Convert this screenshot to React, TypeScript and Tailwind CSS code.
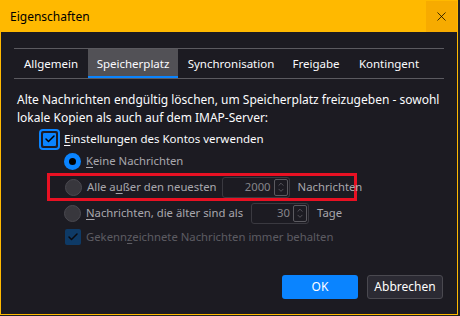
import { X, Check, ChevronUp, ChevronDown } from "lucide-react";

const tabs = [
  { label: "Allgemein", w: "w-[74px]" },
  { label: "Speicherplatz", w: "w-[90px]" },
  { label: "Synchronisation", w: "w-[106px]" },
  { label: "Freigabe", w: "w-[64px]" },
  { label: "Kontingent", w: "w-[82px]" },
];

function Radio({ on }: { on?: boolean }) {
  if (on) {
    return (
      <span className="w-[17px] h-[17px] rounded-full bg-[#0a84ff] flex items-center justify-center shrink-0">
        <span className="w-[7px] h-[7px] rounded-full bg-black" />
      </span>
    );
  }
  return <span className="w-[17px] h-[17px] rounded-full bg-[#38373d] border border-[#4a4950] shrink-0" />;
}

function Spin({ value, w }: { value: string; w: string }) {
  return (
    <div className={`${w} h-[21px] shrink-0 rounded-[3px] border border-[#3a3940] bg-[#1c1b22] flex items-center justify-end pr-[1px]`}>
      <span className="text-[#86858b] pr-[3px]">{value}</span>
      <div className="w-[14px] h-[17px] border border-[#5b5a60] rounded-[2px] flex flex-col items-center justify-center text-[#86858b]">
        <ChevronUp size={10} strokeWidth={1.5} className="-mb-[2px]" />
        <ChevronDown size={10} strokeWidth={1.5} />
      </div>
    </div>
  );
}

export default function App() {
  return (
    <div className="w-[460px] h-[316px] bg-[#202024] overflow-hidden" style={{ fontFamily: "'Noto Sans', 'Open Sans', sans-serif" }}>
      <div className="w-[458px] h-[315px] border border-[#ffb900] flex flex-col text-[11.3px] text-[#fbfbfe] whitespace-nowrap">
        <div className="h-[31px] bg-[#ffb900] flex items-center justify-between shrink-0">
          <span className="pl-[9px] text-black text-[12px]">Eigenschaften</span>
          <div className="w-[31px] h-full bg-[#f7ab00] flex items-center justify-center text-black">
            <X size={15} strokeWidth={1.2} />
          </div>
        </div>
        <div className="flex-1 bg-[#1c1b22] flex flex-col px-[13px] pt-[16px]">
          <div className="flex h-[31px] border-y border-[#5b5a60] items-stretch text-[11.5px]">
            {tabs.map((t) => (
              <div
                key={t.label}
                className={`${t.w} flex items-center justify-center ${t.label === "Speicherplatz" ? "bg-[#525156] border-b-2 border-[#0a84ff] pt-[2px]" : ""}`}
              >
                {t.label}
              </div>
            ))}
          </div>
          <p className="mt-[12px] pl-[3px] leading-[18px] whitespace-normal text-[12px]">
            Alte Nachrichten endgültig löschen, um Speicherplatz freizugeben - sowohl lokale Kopien als auch auf dem IMAP-Server:
          </p>
          <div className="flex items-center gap-[4px] pl-[25px] mt-[1px] h-[22px] text-[11.5px]">
            <span className="w-[21px] h-[21px] rounded-[4px] border-2 border-[#0a84ff] flex items-center justify-center">
              <span className="w-[15px] h-[15px] rounded-[2px] bg-[#0a84ff] border border-[#1c1b22] flex items-center justify-center text-black">
                <Check size={12} strokeWidth={3} />
              </span>
            </span>
            <span>
              <span className="underline underline-offset-2">E</span>instellungen des Kontos verwenden
            </span>
          </div>
          <div className="flex items-center gap-[5px] pl-[50px] h-[22px] text-[#a8a7ad]">
            <Radio on />
            <span>
              <span className="underline underline-offset-2">K</span>eine Nachrichten
            </span>
          </div>
          <div className="ml-[33px] mt-[1px] w-[310px] h-[28px] border-[3px] border-[#e81123] flex items-center gap-[5px] pl-[15px] text-[#a8a7ad]">
            <Radio />
            <span className="w-[132px]">
              Alle a<span className="underline underline-offset-2">u</span>ßer den neuesten
            </span>
            <Spin value="2000" w="w-[68px]" />
            <span className="ml-[3px]">Nachrichten</span>
          </div>
          <div className="flex items-center gap-[5px] pl-[50px] h-[24px] text-[#a8a7ad]">
            <Radio />
            <span className="w-[160px]">
              <span className="underline underline-offset-2">N</span>achrichten, die älter sind als
            </span>
            <Spin value="30" w="w-[58px]" />
            <span className="ml-[3px]">Tage</span>
          </div>
          <div className="flex items-center gap-[5px] pl-[51px] h-[24px] text-[#5d5c62]">
            <span className="w-[16px] h-[16px] rounded-[2px] bg-[#0e3a66] flex items-center justify-center text-[#0a0a0f]">
              <Check size={12} strokeWidth={3} />
            </span>
            <span>
              Gekenn<span className="underline underline-offset-2">z</span>eichnete Nachrichten immer behalten
            </span>
          </div>
          <div className="mt-auto mb-[15px] flex justify-end gap-[9px] pr-[1px]">
            <button className="w-[76px] h-[24px] rounded-[3px] bg-[#0a84ff] text-white text-[12px]">OK</button>
            <button className="w-[76px] h-[24px] rounded-[3px] bg-[#2b2a33] border border-[#4a4950] text-white text-[12px]">Abbrechen</button>
          </div>
        </div>
      </div>
    </div>
  );
}
